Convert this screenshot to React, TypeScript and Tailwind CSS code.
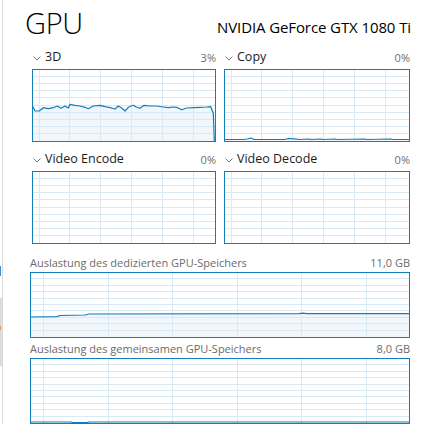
import React from "react";

type ChartProps = {
  w: number; // outer width
  h: number; // outer height
  spacing: number;
  offset: number;
  points?: [number, number][];
  fill?: boolean;
};

function Chart({ w, h, spacing, offset, points, fill = true }: ChartProps) {
  const iw = w - 2;
  const ih = h - 2;
  const hLines: number[] = [];
  for (let i = 1; i < 10; i++) hLines.push(Math.round((i * ih) / 10) - 0.5);
  const vLines: number[] = [];
  for (let x = offset; x < iw; x += spacing) vLines.push(Math.round(x) + 0.5);
  const d = points ? "M" + points.map((p) => `${p[0]} ${p[1]}`).join(" L") : "";
  const fillD = points
    ? d + ` L${points[points.length - 1][0]} ${ih} L${points[0][0]} ${ih} Z`
    : "";
  return (
    <div
      className="border border-[#117dbb] bg-white"
      style={{ width: w, height: h }}
    >
      <svg width={iw} height={ih} className="block">
        {points && fill && <path d={fillD} fill="#f1f6fa" />}
        {hLines.map((y) => (
          <line key={"h" + y} x1={0} x2={iw} y1={y} y2={y} stroke="#d9eaf4" strokeWidth={1} shapeRendering="crispEdges" />
        ))}
        {vLines.map((x) => (
          <line key={"v" + x} x1={x} x2={x} y1={0} y2={ih} stroke="#d9eaf4" strokeWidth={1} shapeRendering="crispEdges" />
        ))}
        {points && <path d={d} fill="none" stroke="#117dbb" strokeWidth={1.2} strokeLinejoin="round" />}
      </svg>
    </div>
  );
}

function Chevron() {
  return (
    <svg width="8" height="5" viewBox="0 0 8 5" className="block">
      <polyline points="0.5,0.5 4,4 7.5,0.5" fill="none" stroke="#7a7a7a" strokeWidth="1" />
    </svg>
  );
}

function SmallBlock({
  label,
  pct,
  w,
  points,
}: {
  label: string;
  pct: string;
  w: number;
  points?: [number, number][];
}) {
  return (
    <div className="flex flex-col" style={{ width: w }}>
      <div className="h-[21px] flex items-center justify-between pb-[2px]">
        <div className="flex items-center">
          <div className="w-[13px] pl-[1px] pt-[1px]">
            <Chevron />
          </div>
          <span className="text-[12.5px] text-[#1b1b1b] leading-none">{label}</span>
        </div>
        <span className="text-[11px] text-[#6e6e6e] leading-none">{pct}</span>
      </div>
      <Chart w={w} h={73} spacing={30.9} offset={5.5} points={points} />
    </div>
  );
}

const p3d: [number, number][] = [
  [0, 36.7], [2, 41], [6.3, 41], [10.3, 37.7], [15.3, 38.7], [20.3, 37.7], [24.3, 36], [28, 38.3],
  [32, 36], [35.3, 38], [37, 34.3], [42, 35.3], [47, 36], [52, 37.3], [55.3, 38.7], [60.3, 36],
  [67, 35.3], [72, 36.7], [77, 37.7], [82, 39], [85.3, 36], [88.7, 38], [92, 41], [95.3, 37.3],
  [100.3, 35.3], [103.7, 37.3], [107, 38.3], [111, 35.3], [117, 36], [123.7, 36], [130.3, 37],
  [135.3, 37.7], [140.3, 37], [143.7, 37.3], [148.7, 39.7], [153.7, 38], [160.3, 37.7], [167, 37.3],
  [173.7, 37], [177.7, 36.7], [180.3, 43.3], [181.3, 71],
];

const pCopy: [number, number][] = [
  [0, 69.5], [18, 69.5], [22, 69], [26, 68], [29, 69.5], [60, 69.5], [63, 68.5], [70, 68.8], [74, 69.5],
  [84, 69], [86, 69.5], [96, 69], [98, 69.5], [110, 69], [112, 69.5], [140, 69], [142, 69.5],
  [166, 69], [168, 69.5], [184, 69.5],
];

const pMem1: [number, number][] = [
  [0, 44], [26, 43.6], [29, 42.5], [54, 42], [58, 41], [268, 40.6], [272, 40.2], [276, 40.6], [378, 40.6],
];

const pMem2: [number, number][] = [
  [0, 63], [40, 63], [42, 63.6], [56, 63.6], [58, 63], [378, 63],
];

export default function App() {
  const font = { fontFamily: '"Open Sans", "Noto Sans", "Liberation Sans", sans-serif' };
  return (
    <div className="w-[434px] h-[433px] bg-white relative overflow-hidden" style={font}>
      {/* sidebar remnants */}
      <div className="absolute left-0 top-[266px] w-[1px] h-[10px] bg-[#3a8fd0]" />
      <div className="absolute left-0 top-[298px] w-[2px] h-[68px] bg-[#dcdcdc]" />
      <div className="absolute left-0 top-[326px] w-[1px] h-[4px] bg-[#e0a060]" />
      <div className="ml-[2px] mt-[9px] border-l border-[#dadada] h-[424px]">
        <div className="-mt-[9px] -ml-[3px]">
          {/* title */}
          <div className="h-[48px] flex items-start justify-between pl-[25px] pr-[23px]">
            <span className="text-[29px] font-light text-black leading-none mt-[8px] tracking-[-0.3px]">GPU</span>
            <span className="text-[15px] text-black leading-none mt-[20px] tracking-[-0.1px]">
              NVIDIA GeForce GTX 1080 Ti
            </span>
          </div>
          {/* small charts */}
          <div className="pl-[32px] flex flex-col gap-[8px]">
            <div className="flex gap-[8px]">
              <SmallBlock label="3D" pct="3%" w={184} points={p3d} />
              <SmallBlock label="Copy" pct="0%" w={186} points={pCopy} />
            </div>
            <div className="flex gap-[8px]">
              <SmallBlock label="Video Encode" pct="0%" w={184} />
              <SmallBlock label="Video Decode" pct="0%" w={186} />
            </div>
          </div>
          {/* memory charts */}
          <div className="pl-[30px] mt-[8px] w-[410px]">
            <div className="h-[20px] flex items-center justify-between text-[11px] text-[#6b6b6b] leading-none">
              <span>Auslastung des dedizierten GPU-Speichers</span>
              <span>11,0 GB</span>
            </div>
            <Chart w={380} h={66} spacing={64.5} offset={12} points={pMem1} />
            <div className="h-[20px] flex items-center justify-between text-[11px] text-[#6b6b6b] leading-none">
              <span>Auslastung des gemeinsamen GPU-Speichers</span>
              <span>8,0 GB</span>
            </div>
            <Chart w={380} h={66} spacing={64.5} offset={12} points={pMem2} fill={false} />
          </div>
        </div>
      </div>
    </div>
  );
}
